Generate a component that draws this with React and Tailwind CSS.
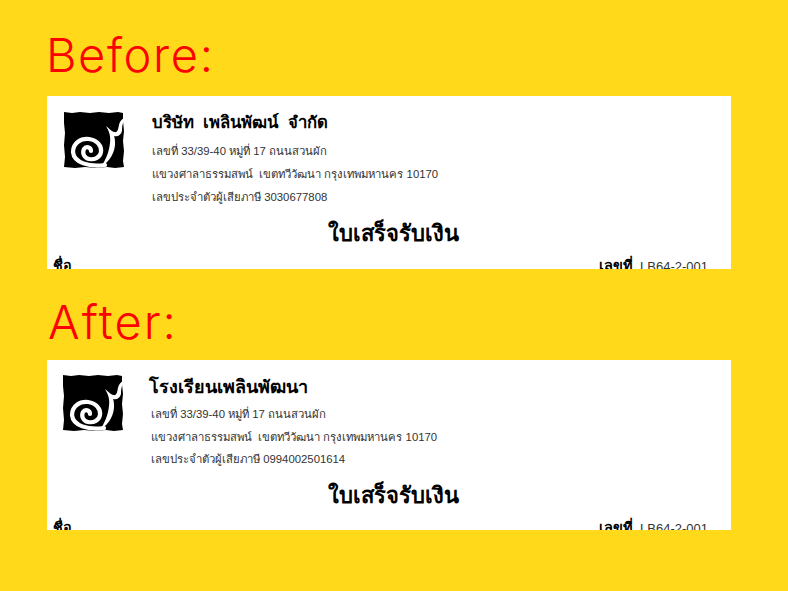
const THAI = "font-['Liberation_Sans','Noto_Sans',sans-serif]"

function SnailLogo({ className }) {
  return (
    <svg className={className} viewBox="0 0 64 58">
      <path
        d="M1 1 L9 2 L17 1 L27 2 L36 1 L46 2 L55 1 L60 2 L60 10 L61 20 L60 30 L61 40 L60 50 L61 56 L52 57 L44 56 L33 57 L22 56 L12 57 L1 56 L2 46 L1 34 L2 22 L1 12 Z"
        fill="#000"
      />
      <path
        d="M64 6 C59 7 57 10 56 14 C55 18 55 22 51 21 C48 20 46 17 43 15 C46 20 48 25 47 32 C46 41 43 48 38 56 C44 52 51 45 52 34 C52 30 52 27 51 25 C55 26 58 24 59 20 C59 14 60 10 64 6 Z"
        fill="#fff"
      />
      <path
        d="M42 54 C26 56 11 52 10 41 C10 32 18 27 26 28 C34 29 39 35 38 41 C37 47 31 49 26 48 C21 47 19 42 21 38 C23 35 28 36 28 40"
        fill="none"
        stroke="#fff"
        strokeWidth="4.2"
        strokeLinecap="round"
      />
    </svg>
  )
}

function Receipt({ name, nameClass, taxId, logoClass, firstLineClass, lineClass, titleClass, docClass, cardClass }) {
  return (
    <div className={`mx-[47px] w-[684px] overflow-hidden bg-white text-black ${THAI} ${cardClass}`}>
      <div className="flex items-start">
        <SnailLogo className={`shrink-0 ${logoClass}`} />
        <div className="min-w-0">
          <p className={`font-bold ${nameClass}`}>{name}</p>
          <p className={`text-[11.35px] text-[#333] ${lineClass} ${firstLineClass}`}>เลขที่ 33/39-40 หมู่ที่ 17 ถนนสวนผัก</p>
          <p className={`text-[11.35px] text-[#333] ${lineClass}`}>แขวงศาลาธรรมสพน์&nbsp; เขตทวีวัฒนา กรุงเทพมหานคร 10170</p>
          <p className={`text-[11.35px] text-[#333] ${lineClass}`}>เลขประจำตัวผู้เสียภาษี {taxId}</p>
        </div>
      </div>
      <h2 className={`pl-[8px] text-center text-[22px] font-bold leading-7 ${titleClass}`}>ใบเสร็จรับเงิน</h2>
      <div className={`flex justify-between pl-[6px] pr-[23px] text-[13px] leading-5 ${docClass}`}>
        <b className="text-[14.5px]">ชื่อ</b>
        <span className="text-[#333]"><b className="text-[14.5px] text-black">เลขที่</b>&nbsp; LB64-2-001</span>
      </div>
    </div>
  )
}

export default function App() {
  return (
    <div className="h-[591px] w-[788px] overflow-hidden bg-[#ffd91a]">
      <h1 className="ml-[46px] pt-[25px] font-['Inter',sans-serif] text-[47px] font-light leading-[59px] tracking-[1.6px] text-[#ff0000]">Before:</h1>
      <div className="mt-[12px]">
        <Receipt
          name="บริษัท  เพลินพัฒน์  จำกัด"
          nameClass="mt-[15px] whitespace-pre-wrap text-[16.7px] leading-6"
          taxId="3030677808"
          logoClass="ml-[16px] mr-[25px] mt-[15px] h-[58px] w-[64px]"
          firstLineClass="mt-[5px]"
          lineClass="leading-[23px]"
          titleClass="mt-[11px]"
          docClass="mt-[8px]"
          cardClass="h-[173px]"
        />
      </div>
      <h1 className="ml-[48px] mt-[23px] font-['Inter',sans-serif] text-[47px] font-light leading-[59px] tracking-[2px] text-[#ff0000]">After:</h1>
      <div className="mt-[9px]">
        <Receipt
          name="โรงเรียนเพลินพัฒนา"
          nameClass="mt-[15px] text-[18px] leading-6"
          taxId="0994002501614"
          logoClass="ml-[15px] mr-[23px] mt-[14px] h-[58px] w-[64px]"
          firstLineClass="mt-[4px]"
          lineClass="ml-[2px] leading-[22.5px]"
          titleClass="mt-[11px]"
          docClass="mt-[8px]"
          cardClass="h-[170px]"
        />
      </div>
    </div>
  )
}
